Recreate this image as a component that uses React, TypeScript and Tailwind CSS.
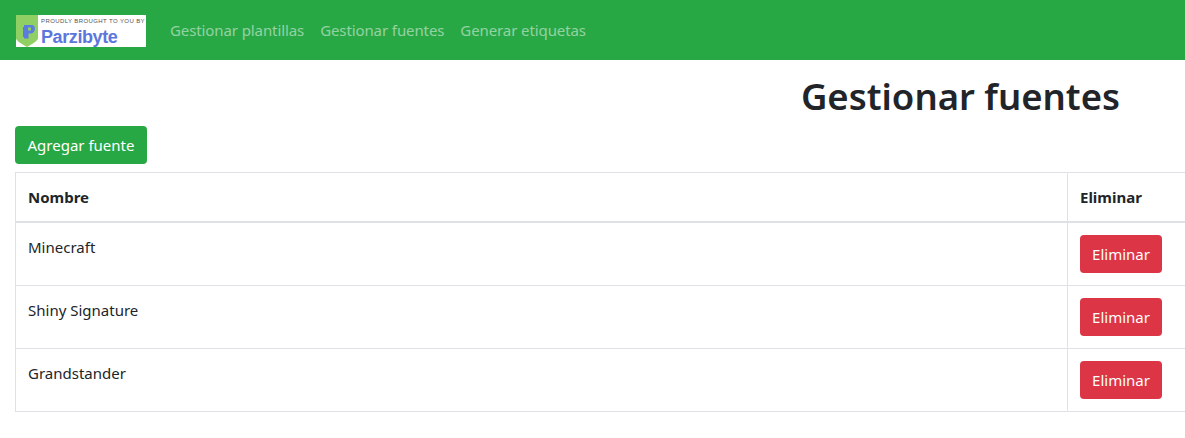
const fonts = "font-['Noto_Sans','Open_Sans',sans-serif]";

const rows = ["Minecraft", "Shiny Signature", "Grandstander"];

function Logo() {
  return (
    <div className="mt-[2px] flex h-8 w-[130px] items-stretch bg-white">
      <svg width="22" height="32" viewBox="0 0 22 32" className="shrink-0">
        <path d="M0 0H22V24C19 28 14 30 11 32C8 30 3 28 0 24Z" fill="#8fcf63" />
        <path d="M8 10H16C20 10 20 18 15 18.5H12.5V23.5H8V22H7V12H8Z" fill="#5b7be0" />
        <rect x="12" y="12.5" width="3" height="3" fill="#8fcf63" />
      </svg>
      <div className="ml-[3px] flex min-w-0 flex-col">
        <div className="mt-[2px] text-[6px] leading-[8px] tracking-[0.4px] whitespace-nowrap text-[#555] font-['Liberation_Sans',sans-serif]">
          PROUDLY BROUGHT TO YOU BY
        </div>
        <div className="mt-[2px] text-[18px] leading-[20px] font-bold tracking-[-0.4px] text-[#5b76dc] font-['Liberation_Sans',sans-serif]">
          Parzibyte
        </div>
      </div>
    </div>
  );
}

export default function App() {
  return (
    <div className={`h-[438px] w-[1185px] overflow-hidden bg-white text-[15px] text-[#212529] ${fonts}`}>
      <nav className="flex h-[60px] items-center bg-[#28a745] pl-4">
        <Logo />
        <div className="ml-6 flex gap-4 text-[15px] tracking-[-0.1px] text-white/50">
          <span>Gestionar plantillas</span>
          <span>Gestionar fuentes</span>
          <span>Generar etiquetas</span>
        </div>
      </nav>

      <div className="pl-[15px]">
        <div className="flex justify-end pr-[65px]">
          <h1 className="mt-[12px] text-[36.5px] leading-[48px] font-semibold">Gestionar fuentes</h1>
        </div>
        <button className="mt-[6px] block h-[38px] w-[132px] rounded bg-[#28a745] text-white">Agregar fuente</button>
        <table className="mt-2 w-[1200px] table-fixed border-collapse">
          <thead>
            <tr className="h-[49px] border border-[#dee2e6] border-b-2">
              <th className="px-3 text-left font-bold">Nombre</th>
              <th className="w-[147px] border-l border-[#dee2e6] px-3 text-left font-bold">Eliminar</th>
            </tr>
          </thead>
          <tbody>
            {rows.map((name, i) => (
              <tr key={name} className={`${i === 0 ? "h-[64px]" : "h-[63px]"} border border-[#dee2e6]`}>
                <td className="px-3 pt-3 pb-0 align-top leading-[24px]">{name}</td>
                <td className="border-l border-[#dee2e6] px-3 align-middle">
                  <button className="block h-[38px] w-[82px] rounded bg-[#dc3545] text-white">Eliminar</button>
                </td>
              </tr>
            ))}
          </tbody>
        </table>
      </div>
    </div>
  );
}
